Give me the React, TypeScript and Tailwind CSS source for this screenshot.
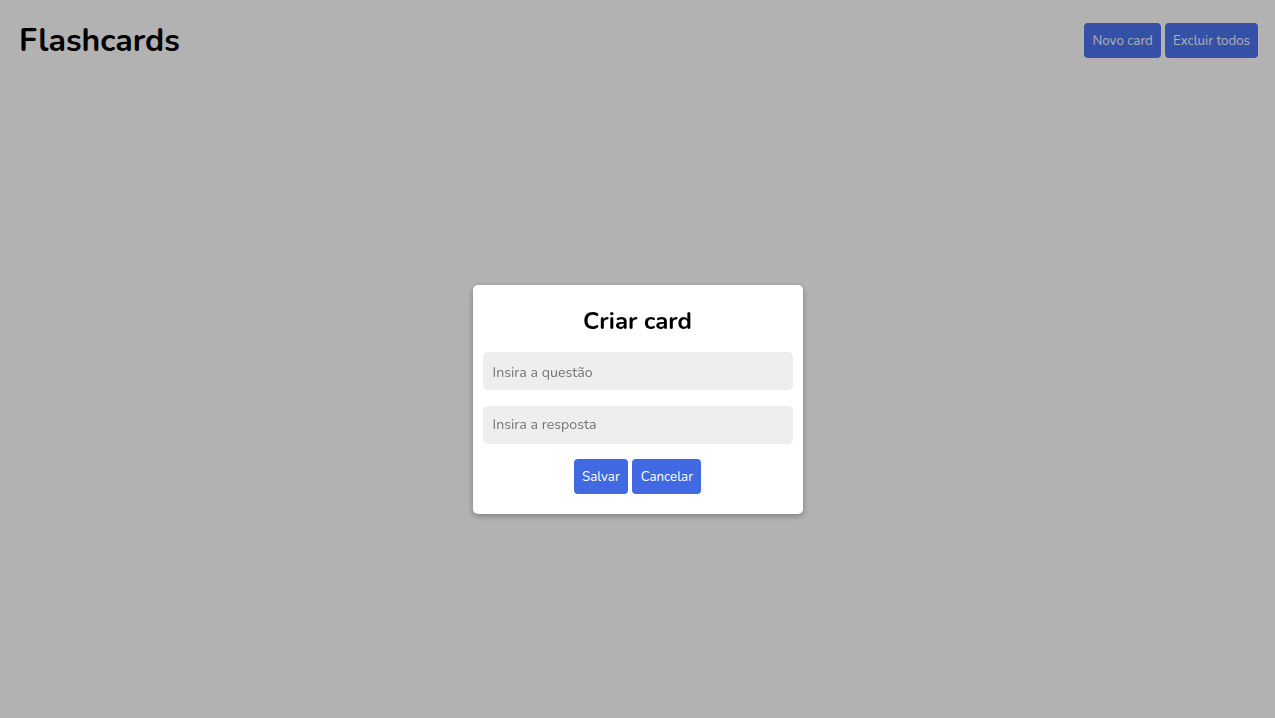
import { useState } from 'react';

const FONT = { fontFamily: '"Nunito", "Lato", "Open Sans", sans-serif' };

export default function App() {
  const [question, setQuestion] = useState('');
  const [answer, setAnswer] = useState('');

  return (
    <div className="relative min-h-[718px] bg-white text-black" style={FONT}>
      <header className="flex h-[80px] items-start justify-between px-[17px] pt-[23px]">
        <h1 className="pl-[2px] text-[32px] font-bold leading-[36px]">Flashcards</h1>
        <div className="flex gap-1">
          <button className="h-[35px] rounded-[4px] bg-[#4d74f0] px-2 pt-[3px] text-[13.33px] text-[#f6f8ff]">
            Novo card
          </button>
          <button className="h-[35px] rounded-[4px] bg-[#4d74f0] px-2 pt-[3px] text-[13.33px] text-[#f6f8ff]">
            Excluir todos
          </button>
        </div>
      </header>

      {/* overlay */}
      <div className="fixed inset-0 flex flex-col items-center justify-center bg-black/30 pt-[80px]">
        <div className="w-[330px] rounded-[5px] bg-white p-[10px] pb-[20px] shadow-[0_2px_6px_rgba(0,0,0,0.3)]">
          <h2 className="mb-[15px] mt-[10px] text-center text-[24px] font-bold leading-[32px]">
            Criar card
          </h2>
          <div className="flex flex-col gap-4">
            <input
              value={question}
              onChange={(e) => setQuestion(e.target.value)}
              placeholder="Insira a questão"
              className="h-[38px] w-full rounded-[5px] bg-[#eeeeee] px-[10px] pt-[3px] text-[14.2px] outline-none placeholder:text-[#757575]"
            />
            <input
              value={answer}
              onChange={(e) => setAnswer(e.target.value)}
              placeholder="Insira a resposta"
              className="h-[38px] w-full rounded-[5px] bg-[#eeeeee] px-[10px] text-[14.2px] outline-none placeholder:text-[#757575]"
            />
          </div>
          <div className="mt-[15px] flex justify-center gap-1">
            <button className="h-[35px] rounded-[4px] bg-[#4169e1] px-[8.5px] pt-[3px] text-[13.33px] text-white">
              Salvar
            </button>
            <button className="h-[35px] rounded-[4px] bg-[#4169e1] px-[8.5px] pt-[3px] text-[13.33px] text-white">
              Cancelar
            </button>
          </div>
        </div>
      </div>
    </div>
  );
}
